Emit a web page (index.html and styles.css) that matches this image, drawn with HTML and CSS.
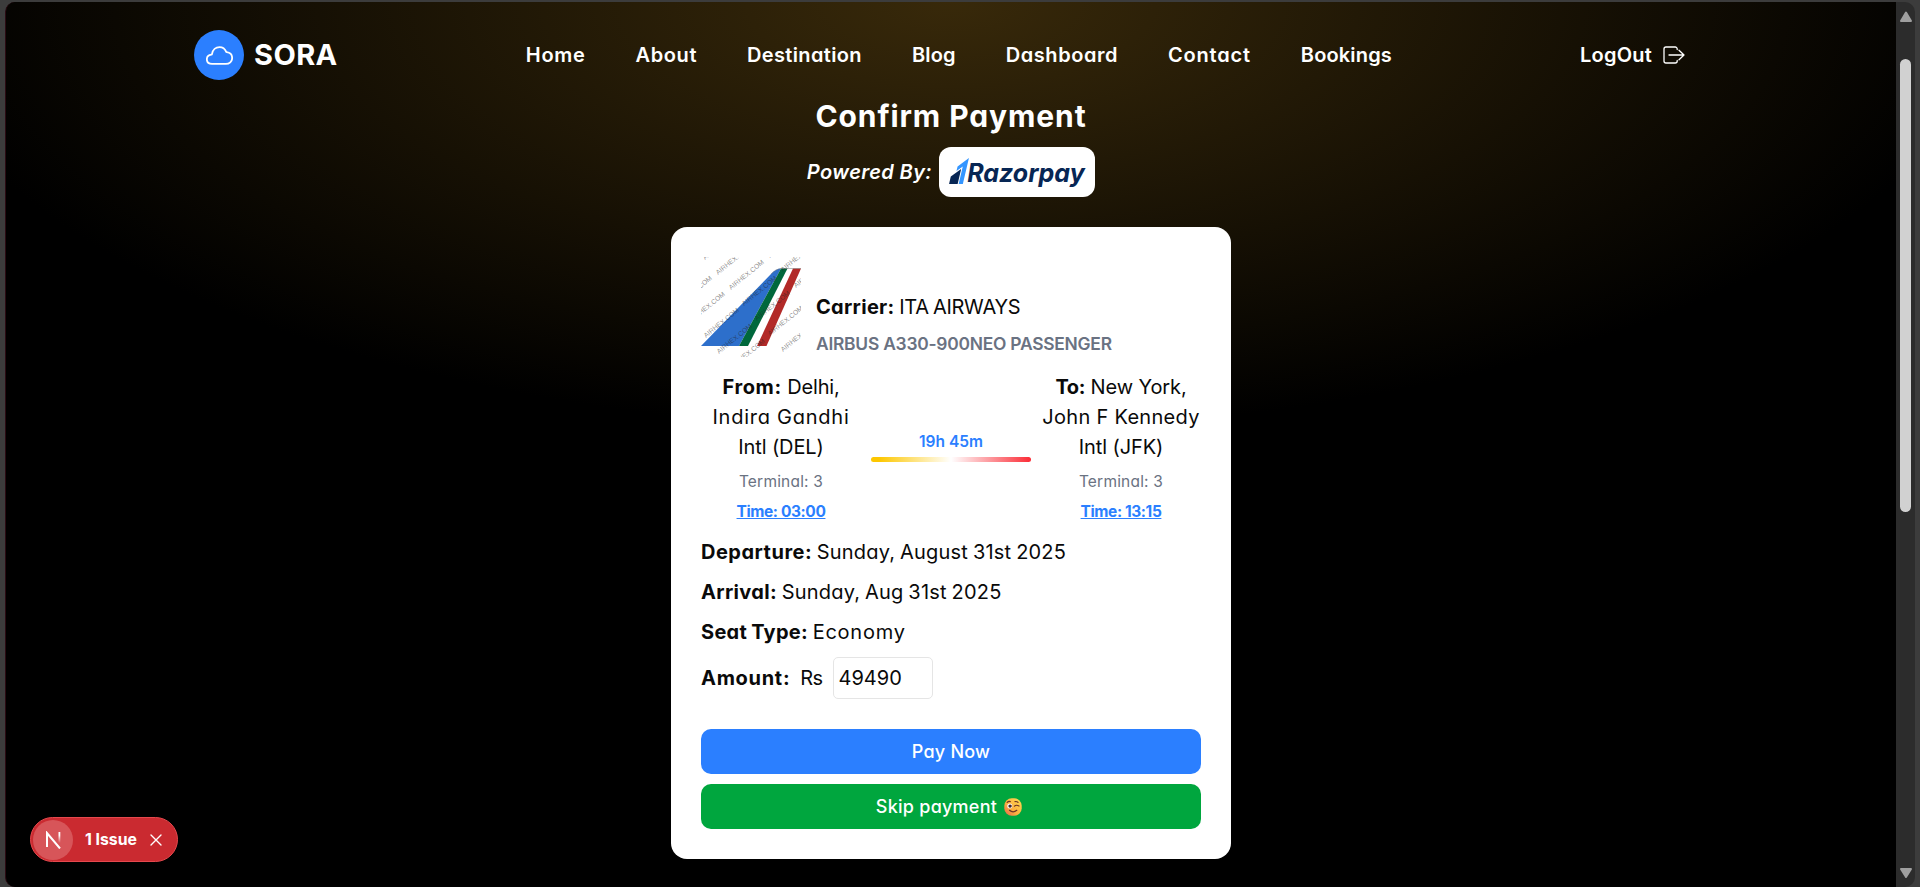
FILE: index.html
```html
<!DOCTYPE html>
<html lang="en">
<head>
<meta charset="utf-8">
<title>SORA - Confirm Payment</title>
<link rel="stylesheet" href="styles.css">
</head>
<body>
<div class="window">
  <div class="page">
    <header class="header">
      <a class="brand">
        <span class="brand-mark">
          <svg width="27" height="27" viewBox="0 0 512 512" fill="none" stroke="#fff" stroke-width="34" stroke-linejoin="round"><path d="M100.180 241.190a15.930 15.930 0 0 0 13.370-13.250C126.600 145.590 186.340 96 256 96c64.690 0 107.790 42.360 124.920 87a16.110 16.110 0 0 0 12.530 10.180C449.360 202.060 496 239.210 496 304c0 66-54 112-120 112H116c-55 0-100-27.440-100-88 0-54.430 43.890-80.260 84.180-86.810Z"/></svg>
        </span>
        <span class="brand-name">SORA</span>
      </a>
      <nav class="nav">
        <a class="ls-home">Home</a>
        <a class="ls-about">About</a>
        <a class="ls-destination">Destination</a>
        <a class="ls-blog">Blog</a>
        <a class="ls-dashboard">Dashboard</a>
        <a class="ls-contact">Contact</a>
        <a class="ls-bookings">Bookings</a>
      </nav>
      <a class="logout">
        <span>LogOut</span>
        <svg width="22" height="18" viewBox="0 0 22 18" fill="none" stroke="#fff" stroke-width="1.3" stroke-linecap="round" stroke-linejoin="round"><path d="M14.200 3.600V3a2 2 0 0 0-2-2H3a2 2 0 0 0-2 2v12a2 2 0 0 0 2 2h9.200a2 2 0 0 0 2-2v-.6M6 9h15M16 4.200L21 9l-5 4.800"/></svg>
      </a>
    </header>

    <main class="main">
      <h1 class="title">Confirm Payment</h1>
      <div class="powered">
        <span class="powered-label">Powered By:</span>
        <div class="razorpay">
          <svg class="razorpay-mark" width="20" height="26" viewBox="0 0 286 326" preserveAspectRatio="none"><path fill="#3395ff" d="M122.630 105.700l-15.750 57.970 90.150-58.300-58.960 219.980 59.880.050L285.050.480"/><path fill="#072654" d="M25.600 232.920L.800 325.400h122.730l50.220-188.130-148.150 95.650"/></svg>
          <span class="razorpay-name">Razorpay</span>
        </div>
      </div>

      <section class="card">
        <div class="carrier">
          <svg class="airline" width="100" height="100" viewBox="0 0 100 100">
            <path fill="#2d6fcb" d="M0 89L70 17q5-5.500 10-5.500L38 89z"/>
            <path fill="#00683c" d="M80 11.500h6.500L47 89h-9z"/>
            <path fill="#b22a28" d="M92 11.500h8L65.500 89H56z"/>
            <path fill="none" stroke="#777" stroke-width=".5" d="M70 17q5-5.500 10-5.500h20"/>
            <g class="watermark">
              <text transform="translate(17 18) rotate(-39)">AIRHEX.COM</text>
              <text transform="translate(30 33) rotate(-39)">AIRHEX.COM</text>
              <text transform="translate(43 49) rotate(-39)">AIRHEX.COM</text>
              <text transform="translate(56 64) rotate(-39)">AIRHEX.COM</text>
              <text transform="translate(69 79) rotate(-39)">AIRHEX.COM</text>
              <text transform="translate(82 95) rotate(-39)">AIRHEX.COM</text>
              <text transform="translate(-22 49) rotate(-39)">AIRHEX.COM</text>
              <text transform="translate(-9 65) rotate(-39)">AIRHEX.COM</text>
              <text transform="translate(5 81) rotate(-39)">AIRHEX.COM</text>
              <text transform="translate(18 97) rotate(-39)">AIRHEX.COM</text>
              <text transform="translate(31 112) rotate(-39)">AIRHEX.COM</text>
              <text transform="translate(82 15) rotate(-39)">AIRHEX.COM</text>
              <text transform="translate(95 31) rotate(-39)">AIRHEX.COM</text>
              <text transform="translate(4 3) rotate(-39)">AIRHEX.COM</text>
              <text transform="translate(69 1) rotate(-39)">AIRHEX.COM</text>
            </g>
          </svg>
          <div class="carrier-text">
            <p class="line"><b class="ls-carrier">Carrier:</b> <span class="ls-ita">ITA AIRWAYS</span></p>
            <p class="aircraft">AIRBUS A330-900NEO PASSENGER</p>
          </div>
        </div>

        <div class="route">
          <div class="stop">
            <p class="airport"><b class="ls-from">From:</b> <span class="ls-tight">Delhi,</span><br><span class="ls-indira">Indira Gandhi</span><br><span class="ls-intl">Intl (DEL)</span></p>
            <p class="terminal">Terminal: 3</p>
            <p class="time">Time: 03:00</p>
          </div>
          <div class="duration">
            <span class="duration-text">19h 45m</span>
            <div class="duration-bar"></div>
          </div>
          <div class="stop">
            <p class="airport"><b class="ls-to">To:</b> <span class="ls-intl">New York,</span><br><span class="ls-john">John F Kennedy</span><br><span class="ls-intl">Intl (JFK)</span></p>
            <p class="terminal">Terminal: 3</p>
            <p class="time">Time: 13:15</p>
          </div>
        </div>

        <div class="details">
          <p class="line"><b class="ls-departure">Departure:</b> <span class="ls-date">Sunday, August 31st 2025</span></p>
          <p class="line"><b class="ls-arrival">Arrival:</b> <span class="ls-date">Sunday, Aug 31st 2025</span></p>
          <p class="line"><b class="ls-seat">Seat Type:</b> <span class="ls-economy">Economy</span></p>
          <div class="amount"><b class="ls-amount">Amount:</b><span class="currency">Rs</span><div class="field">49490</div></div>
        </div>

        <div class="actions">
          <button class="button pay">Pay Now</button>
          <button class="button skip"><span>Skip payment</span>
            <svg width="18" height="18" viewBox="0 0 18 18">
              <defs><linearGradient id="face" x1="1" y1="0" x2="0" y2="1"><stop offset="0" stop-color="#ffdc50"/><stop offset=".6" stop-color="#fcae40"/><stop offset="1" stop-color="#e9604e"/></linearGradient></defs>
              <rect x=".3" y=".3" width="17.400" height="17.400" rx="7.500" fill="url(#face)"/>
              <circle cx="5.800" cy="8" r="2.500" fill="#fff"/><circle cx="6.100" cy="8.100" r="1.700" fill="#43272b"/>
              <path d="M3.200 4.400Q4.500 3 6.300 3.600M11 3.600q1.800-.4 3 .8M10.500 8.200q1.800-1.800 4.500-.2M5.500 12.300q3.500 3.200 7.300 0" fill="none" stroke="#6d3526" stroke-width="1.200" stroke-linecap="round"/>
            </svg>
          </button>
        </div>
      </section>
    </main>
  </div>

  <div class="scrollbar">
    <svg width="14" height="12" viewBox="0 0 14 12"><path d="M7 1.500L12 10H2z" fill="#9f9f9f" stroke="#9f9f9f" stroke-width="2" stroke-linejoin="round"/></svg>
    <div class="thumb"></div>
    <svg width="14" height="12" viewBox="0 0 14 12"><path d="M7 10L12 2H2z" fill="#9f9f9f" stroke="#9f9f9f" stroke-width="2" stroke-linejoin="round"/></svg>
  </div>
</div>

<div class="issues">
  <span class="issues-mark">
    <svg width="16" height="18" viewBox="0 0 16 18" fill="none" stroke-width="2">
      <defs><linearGradient id="fade" x1="0" y1="0" x2="0" y2="1"><stop offset=".3" stop-color="#fff"/><stop offset="1" stop-color="#fff" stop-opacity="0"/></linearGradient></defs>
      <path d="M2 16V2L15 17.500" stroke="#fff"/><path d="M13.500 1h1.800v11h-1.800z" fill="url(#fade)"/>
    </svg>
  </span>
  <span class="issues-text">1 Issue</span>
  <svg width="12" height="12" viewBox="0 0 12 12" stroke="#fff" stroke-width="1.400" stroke-linecap="round"><path d="M1 1l10 10M11 1L1 11"/></svg>
</div>
</body>
</html>
```
FILE: styles.css
```css
* { box-sizing: border-box; }

body {
  margin: 0;
  height: 887px;
  overflow: hidden;
  background: #3c3c3c;
  color: #0a0a0a;
  font-family: Inter, "Liberation Sans", sans-serif;
  font-feature-settings: "cv11";
}

p, h1 { margin: 0; }
svg { display: block; flex: none; }

.window {
  display: flex;
  height: 887px;
  padding: 2px 5px 0;
}

.page {
  flex: 1;
  border-left: 1px solid #2b0b13;
  border-radius: 10px 0 0 10px;
  background: radial-gradient(ellipse 1040px 430px at 50% 0, #38290a, #000) #000;
}

/* Header */
.header {
  display: flex;
  align-items: center;
  justify-content: space-between;
  margin: 0 211px 0 188px;
  padding-top: 28px;
  color: #fff;
  font-size: 20px;
  font-weight: 600;
  line-height: 28px;
}

.brand { display: flex; align-items: center; gap: 10px; }

.brand-mark {
  display: flex;
  align-items: center;
  justify-content: center;
  width: 50px;
  height: 50px;
  border-radius: 50%;
  background: #2b7fff;
}

.brand-name { font-size: 29px; font-weight: 750; letter-spacing: .4px; }
.nav { display: flex; gap: 50px; }
.logout { display: flex; align-items: center; gap: 11px; letter-spacing: .2px; }

/* Heading */
.main {
  display: flex;
  flex-direction: column;
  align-items: center;
}

.title {
  margin-top: 18px;
  color: #fff;
  font-size: 30px;
  font-weight: 650;
  line-height: 36px;
  letter-spacing: .9px;
}

.powered {
  display: flex;
  align-items: center;
  gap: 7px;
  margin-top: 13px;
}

.powered-label {
  color: #fff;
  font-size: 20px;
  font-style: italic;
  font-weight: 600;
  letter-spacing: .4px;
}

.razorpay {
  display: flex;
  align-items: center;
  width: 156px;
  height: 50px;
  padding-left: 10px;
  border-radius: 12px;
  background: #fff;
}

.razorpay-mark { margin: 0 -2px 3px 0; }

.razorpay-name {
  margin-top: 1px;
  color: #072654;
  font-size: 25px;
  font-style: italic;
  font-weight: 700;
  line-height: 30px;
}

/* Booking card */
.card {
  width: 560px;
  height: 632px;
  margin-top: 30px;
  padding: 30px;
  border-radius: 16px;
  background: #fff;
  font-size: 20px;
  line-height: 30px;
}

.carrier { display: flex; align-items: flex-end; gap: 15px; }
.line { white-space: nowrap; word-spacing: -1px; }

.watermark {
  fill: #222;
  fill-opacity: .5;
  font: 6.800px "Liberation Sans", sans-serif;
}

.aircraft {
  margin-top: 8px;
  color: #6a7282;
  font-size: 17.400px;
  font-weight: 600;
  line-height: 27px;
  letter-spacing: -.23px;
}

.route {
  display: grid;
  grid-template-columns: 160px 160px 160px;
  gap: 10px;
  margin-top: 15px;
}

.stop { text-align: center; white-space: nowrap; }

.terminal {
  margin-top: 8px;
  color: #6a7282;
  font-size: 15.500px;
  line-height: 24px;
  letter-spacing: .2px;
}

.time {
  margin-top: 6px;
  color: #2b7fff;
  font-size: 15.500px;
  font-weight: 700;
  line-height: 24px;
  letter-spacing: -.4px;
  text-decoration: underline;
}

.duration {
  display: flex;
  flex-direction: column;
  align-items: center;
  justify-content: center;
  gap: 3px;
  padding-bottom: 4px;
}

.duration-text {
  color: #2b7fff;
  font-size: 15.500px;
  font-weight: 600;
  line-height: 24px;
}

.duration-bar {
  width: 100%;
  height: 5px;
  border-radius: 3px;
  background: linear-gradient(90deg, #fdc700 5%, #fff 50%, #fb2c36);
}

.details {
  display: flex;
  flex-direction: column;
  gap: 10px;
  margin-top: 13px;
}

.amount { display: flex; align-items: center; }
.currency { margin: 0 10px 0 10px; letter-spacing: -.6px; }

.field {
  width: 100px;
  height: 42px;
  padding: 5px;
  border: 1px solid #e5e5e5;
  border-radius: 5px;
}

.actions {
  display: flex;
  flex-direction: column;
  gap: 10px;
  margin-top: 30px;
}

.button {
  display: flex;
  align-items: center;
  justify-content: center;
  gap: 7px;
  height: 45px;
  padding: 0;
  border: 0;
  border-radius: 10px;
  color: #fff;
  font: 550 18px Inter, sans-serif;
  font-feature-settings: "cv11";
  letter-spacing: .25px;
}

.pay { background: #2b7fff; }
.skip { padding-right: 4px; background: #00a63e; }

/* Tracking per label */
.ls-home { letter-spacing: .7px; }
.ls-about { letter-spacing: .6px; }
.ls-destination { letter-spacing: .35px; }
.ls-blog { letter-spacing: .2px; }
.ls-dashboard { letter-spacing: .55px; }
.ls-contact { letter-spacing: .8px; }
.ls-bookings { letter-spacing: .15px; }
.ls-carrier, .ls-seat { letter-spacing: .3px; }
.ls-ita { letter-spacing: -.3px; }
.ls-from { letter-spacing: .6px; }
.ls-to { letter-spacing: -.4px; }
.ls-tight { letter-spacing: -.2px; }
.ls-indira { letter-spacing: .75px; }
.ls-intl { letter-spacing: -.1px; }
.ls-john { letter-spacing: .3px; }
.ls-departure { letter-spacing: .5px; }
.ls-amount { letter-spacing: .7px; }
.ls-date { letter-spacing: .2px; }
.ls-arrival { letter-spacing: .35px; }
.ls-economy { letter-spacing: .75px; }

/* Scrollbar */
.scrollbar {
  display: flex;
  flex-direction: column;
  align-items: center;
  width: 19px;
  padding: 9px 0 8px;
  border-radius: 0 10px 10px 0;
  background: #2c2c2c;
}

.thumb {
  width: 11px;
  height: 453px;
  margin: 36px 0 auto;
  border-radius: 6px;
  background: #d1d1d1;
}

/* Floating dev indicator */
.issues {
  position: absolute;
  left: 30px;
  bottom: 25px;
  display: flex;
  align-items: center;
  width: 148px;
  height: 45px;
  padding-left: 2px;
  border: 1px solid #e5484d;
  border-radius: 23px;
  background: #ca2a30;
  color: #fff;
}

.issues-mark {
  display: flex;
  align-items: center;
  justify-content: center;
  width: 40px;
  height: 40px;
  border-radius: 50%;
  background: #d75559;
}

.issues-text {
  margin: 0 13px 0 12px;
  font-size: 15.800px;
  font-weight: 650;
  font-feature-settings: normal;
}
```
